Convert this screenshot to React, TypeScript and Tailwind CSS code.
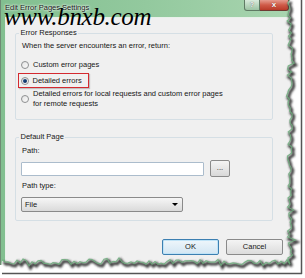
import React from "react";

function rng(seed: number) {
  let s = seed;
  return () => {
    s = (s * 16807) % 2147483647;
    return (s - 1) / 2147483646;
  };
}

// jagged torn edge along the right and bottom sides
function tornEdge() {
  const r = rng(11);
  const pts: [number, number][] = [];
  for (let y = 0; y <= 260; y += 3) {
    const spike = r() > 0.8 ? (r() - 0.5) * 7 : 0;
    pts.push([290 + (r() - 0.5) * 5 + spike, y]);
  }
  for (let x = 290; x >= 0; x -= 3) {
    const spike = r() > 0.8 ? (r() - 0.5) * 6 : 0;
    pts.push([x, 262 + (r() - 0.5) * 5 + spike]);
  }
  return pts;
}

function Radio({ checked }: { checked?: boolean }) {
  return (
    <div className="w-[8px] h-[8px] shrink-0 rounded-full border border-[#8e9091] bg-gradient-to-br from-[#e4e4e4] to-[#fbfbfb] flex items-center justify-center">
      {checked && <div className="w-[4px] h-[4px] rounded-full bg-gradient-to-br from-[#1d4e8c] to-[#0a2a5a]" />}
    </div>
  );
}

function Group({ label, children }: { label: string; children: React.ReactNode }) {
  return (
    <fieldset className="w-[258px] border border-[#d5dfe5] rounded-[2px] p-0">
      <legend className="ml-[3px] px-[1.5px] leading-[10px]">{label}</legend>
      {children}
    </fieldset>
  );
}

function Button({ children, focused }: { children: React.ReactNode; focused?: boolean }) {
  return (
    <div
      className={`w-[57px] h-[16px] rounded-[2px] border flex items-center justify-center bg-gradient-to-b ${
        focused
          ? "border-[#3c7fb1] from-[#eef6fb] to-[#d3e6f3] shadow-[0_0_0_1px_#bfe3f7_inset]"
          : "border-[#8a8a8a] from-[#f4f4f4] to-[#dcdcdc]"
      }`}
    >
      {children}
    </div>
  );
}

export default function App() {
  const edge = tornEdge();
  const edgeStr = edge.map(([x, y]) => `${x},${y}`).join(" ");
  const shadowStr = edge.map(([x, y]) => `${x + 1.5},${y + 2}`).join(" ");

  return (
    <div className="relative w-[305px] h-[278px] bg-white overflow-hidden font-['Liberation_Sans',Arial,sans-serif] text-[7.5px] text-[#161616]">
      <div className="w-[292px] h-[265px] flex flex-col border-l border-[#6f8a74] bg-gradient-to-r from-[#82bf90] via-[#93c99e] to-[#a9d5b0]">
        {/* title bar */}
        <div className="h-[17px] flex items-start pl-[4px] shrink-0">
          <span className="mt-[3px] leading-[10px] [text-shadow:0_0_3px_#ffffff,0_0_2px_#ffffff]">
            Edit Error Pages Settings
          </span>
          <div className="ml-auto mr-[3px] flex">
            <div className="w-[16px] h-[11px] border border-[#5f7a64] border-t-0 rounded-bl-[3px] bg-gradient-to-b from-[#d9ebdc] to-[#9cc3a3] flex items-center justify-center text-[7px] font-bold text-[#f4f4f4] [text-shadow:0_0_1px_#4a4a4a]">
              ?
            </div>
            <div className="w-[29px] h-[11px] border border-[#6e3b33] border-t-0 border-l-0 rounded-br-[3px] bg-gradient-to-b from-[#e59b8e] via-[#cf5a48] to-[#b93a28] flex items-center justify-center text-[8px] font-bold text-white [text-shadow:0_0_1px_#5a1a10]">
              x
            </div>
          </div>
        </div>

        {/* client area */}
        <div className="flex-1 ml-[4px] bg-[#f0f0f0] border-l border-t border-[#e8f1ea] pt-[10px] pl-[9px] flex flex-col">
          <Group label="Error Responses">
            <div className="pl-[5px] pt-[3px] pb-[10px] flex flex-col">
              <div className="ml-[1px] leading-[10px]">When the server encounters an error, return:</div>
              <div className="mt-[9px] flex items-center gap-[4px] h-[10px] leading-[10px]">
                <Radio />
                <span>Custom error pages</span>
              </div>
              <div className="mt-[3px] -ml-[3px] w-[71px] h-[15px] border-[1.5px] border-[#d42a30] pl-[1.5px] flex items-center gap-[4px] leading-[10px] shadow-[1px_1px_1px_rgba(0,0,0,0.2)]">
                <Radio checked />
                <span>Detailed errors</span>
              </div>
              <div className="mt-[1px] flex items-center gap-[4px] leading-[10px]">
                <Radio />
                <span>
                  Detailed errors for local requests and custom error pages
                  <br />
                  for remote requests
                </span>
              </div>
            </div>
          </Group>

          <div className="mt-[12px]">
            <Group label="Default Page">
              <div className="pl-[5px] pt-[4px] pb-[8px] flex flex-col">
                <div className="ml-[1px] leading-[10px]">Path:</div>
                <div className="mt-[4px] flex items-center gap-[6px]">
                  <div className="w-[183px] h-[14px] bg-white border border-[#abbccc] rounded-[1px]" />
                  <div className="w-[20px] h-[17px] rounded-[2px] border border-[#8a8a8a] bg-gradient-to-b from-[#f4f4f4] to-[#d8d8d8] flex items-center justify-center leading-none pb-[2px]">
                    ...
                  </div>
                </div>
                <div className="mt-[4px] ml-[1px] leading-[10px]">Path type:</div>
                <div className="mt-[6px] w-[162px] h-[15px] rounded-[2px] border border-[#8a8a8a] bg-gradient-to-b from-[#f6f6f6] to-[#dadada] flex items-center pl-[3px] pr-[4px]">
                  <span className="leading-[10px]">File</span>
                  <div className="ml-auto w-0 h-0 border-l-[3px] border-r-[3px] border-t-[3px] border-l-transparent border-r-transparent border-t-black" />
                </div>
              </div>
            </Group>
          </div>

          <div className="mt-[18px] ml-[147px] flex gap-[7px]">
            <Button focused>OK</Button>
            <Button>Cancel</Button>
          </div>
        </div>
      </div>

      {/* watermark */}
      <div className="absolute left-[4px] top-[4px] font-['Liberation_Serif',serif] italic text-[25px] tracking-[-0.3px] leading-none text-black">
        www.bnxb.com
      </div>

      {/* torn edge + picture frame */}
      <svg className="absolute inset-0 pointer-events-none" width="305" height="278" viewBox="0 0 305 278">
        <defs>
          <filter id="blur" x="-5%" y="-5%" width="110%" height="110%">
            <feGaussianBlur stdDeviation="0.8" />
          </filter>
        </defs>
        <polygon points={`305,0 ${edgeStr} 0,278 305,278`} fill="#ffffff" />
        <polyline points={shadowStr} fill="none" stroke="#3e3e3e" strokeWidth="3" filter="url(#blur)" />
        <polyline points={edgeStr} fill="none" stroke="#6fae7e" strokeWidth="1.2" opacity="0.85" />
        <line x1="301.5" y1="0" x2="301.5" y2="274" stroke="#555555" strokeWidth="1.5" />
        <line x1="2" y1="273.5" x2="302" y2="273.5" stroke="#555555" strokeWidth="1.5" />
      </svg>
    </div>
  );
}
